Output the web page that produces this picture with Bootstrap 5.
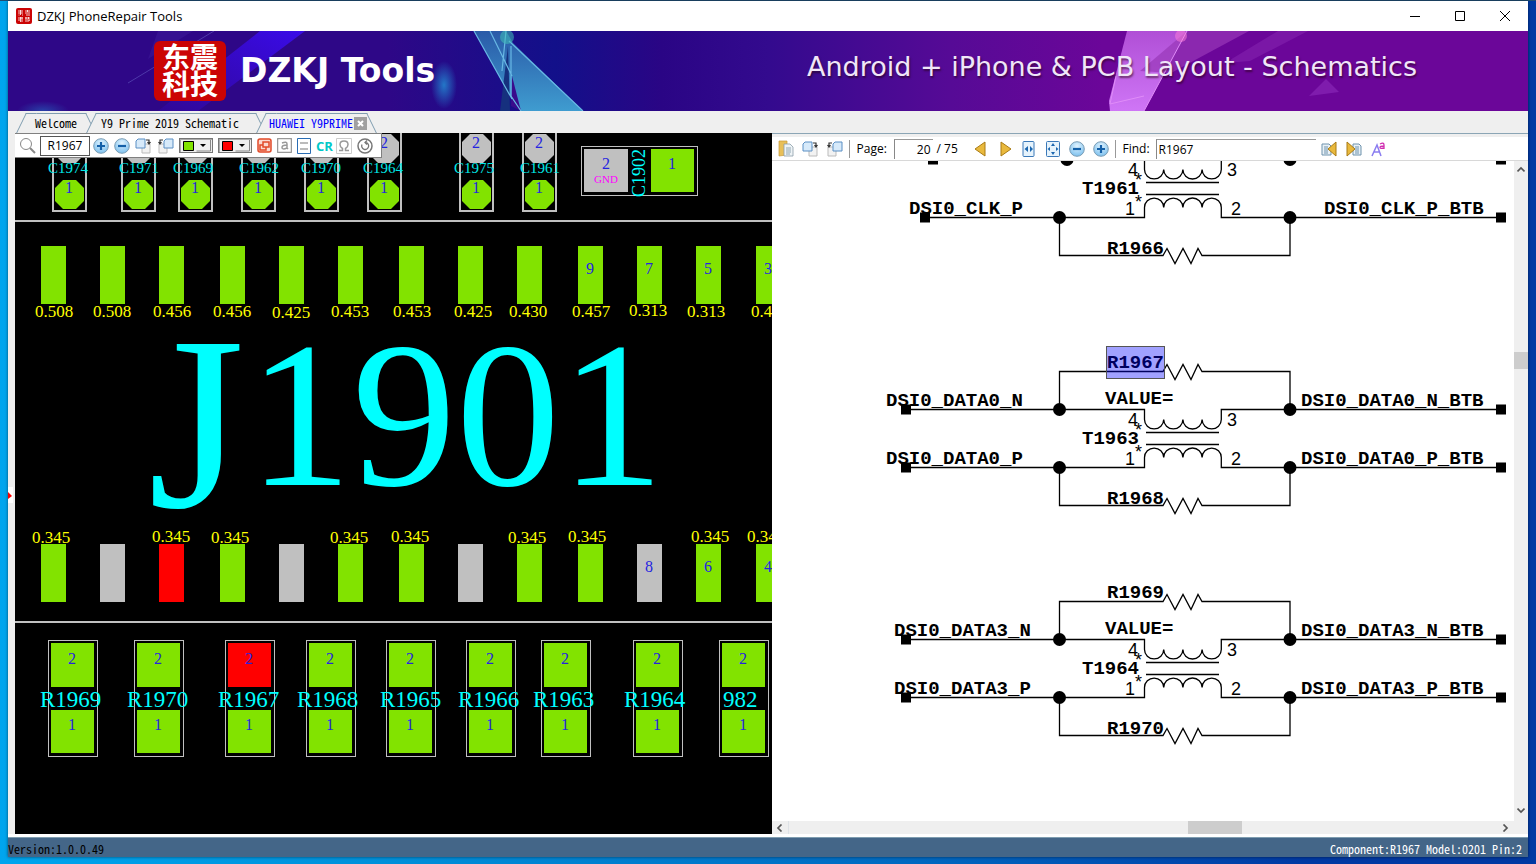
<!DOCTYPE html>
<html lang="en">
<head>
<meta charset="utf-8">
<meta name="viewport" content="width=device-width, initial-scale=1">
<title>DZKJ PhoneRepair Tools</title>
<link rel="stylesheet" href="https://cdn.jsdelivr.net/npm/bootstrap@5.3.0/dist/css/bootstrap.min.css">
<style>
:root { --cell: "Noto Sans Mono CJK SC", "Noto Sans CJK SC", monospace; --ui: "Open Sans", "Noto Sans", sans-serif; }
body { font: 12px/16px var(--ui); color: #000; background: linear-gradient(90deg, #00a5ee, #0090da 25%, #0068c0 60%, #0039a3 85%); }
button { background: none; border: 0; padding: 0; color: inherit; font: inherit; line-height: 0; }
input, select { border-radius: 0; outline: 0; font: inherit; }
svg { display: block; flex: none; }
.desktop { padding: 1px 8px 7px; background: linear-gradient(#1f4e75 1px, transparent 1px); }
.app { background: #efefef; box-shadow: 0 0 3px #0008; }
.titlebar { height: 30px; padding-right: 1px; font-size: 13px; }
.apptitle { margin-left: 5px; }
.winbtn { width: 45px; height: 30px; }
.banner { height: 80px; background: linear-gradient(90deg, #2e0787, #2e0787 25%, #12108a 36%, #2a0585 43%, #330a8e 50%, #560a96 62%, #6b0699 72%); }
.brandmark { width: 72px; height: 60px; margin-left: 146px; background: #cb0404; border-radius: 6px; color: #fff; font: 700 28px/27px "Noto Sans CJK SC", sans-serif; padding-top: 2px; }
.brandname { font: 700 33px/76px "DejaVu Sans", sans-serif; color: #fff; margin-left: 14px; }
.slogan { font: 400 27px/72px "DejaVu Sans", sans-serif; height: 80px; color: #f0e6f8; text-shadow: 1px 2px 2px #2008; margin-right: 111px; }
.tabstrip { height: 22px; padding: 2px 0 0 13px; }
.doctab { position: relative; height: 20px; font: 12px/20px var(--cell); color: #000; text-decoration: none; white-space: pre; isolation: isolate; padding: 0 14px; }
.doctab.closable { padding: 0 22px 0 10px; }
.doctab.current { padding: 0 5px 0 8px; gap: 1px; }
.doctab::before, .doctab::after { content: ""; position: absolute; z-index: -1; top: 0; bottom: 0; background: #efefef; border-top: 1px solid #7f9db0; }
.doctab::before { left: 0; right: 20px; transform: skewX(-26deg); border-left: 1px solid #7f9db0; }
.doctab::after { right: 0; left: 20px; transform: skewX(26deg); border-right: 1px solid #7f9db0; }
.doctab a { color: #00f; }
.tabclose { width: 13px; height: 13px; background: #a0a0a0; }
.gutter { width: 7px; }
.gutter svg { margin-top: 22px; }
.views { display: grid; grid-template-columns: 1fr 1fr; }
.board { background: #000; overflow: hidden; position: relative; min-width: 0; }
.boardtools { position: absolute; left: 0; top: 0; height: 25px; padding: 0 8px 0 4px; background: #fff; border: 1px solid #808080; border-left: 0; gap: 5px; }
.findpart { width: 50px; height: 20px; border: 1px solid #555; text-align: center; padding: 0; margin: 0 -2px 0 -1px; }
.swatch { position: relative; width: 34px; height: 15px; }
.swatch select { width: 34px; height: 15px; padding: 0; appearance: none; border: 1px solid #777; box-shadow: inset 1px 1px #aaa; color: transparent; background: #efefef; }
.swatch svg { position: absolute; left: 0; top: 0; pointer-events: none; }
.cr { font: 700 13px/16px var(--ui); color: #00c8c8; margin-right: -2px; }
.pdf { border-top: 1px solid #8ba5b5; padding-top: 3px; min-width: 0; }
.pdftools { height: 24px; background: #fff; border-bottom: 1px solid #d8d8d8; padding-left: 6px; }
.pdftools input { height: 20px; border: 0; border-left: 1px solid #888; border-top: 1px solid #999; background: #fff; padding: 0 2px; }
.sep { width: 1px; height: 18px; background: #999; margin: 0 7px 0 6px; }
.sheet { background: #fff; position: relative; overflow: hidden; min-width: 0; min-height: 0; }
.canvas { position: absolute; inset: 0; width: 100%; height: 100%; }
.vbar { width: 14px; padding: 5px 0 20px; }
.hbar { height: 13px; }
.hbar button { width: 17px; }
.thumb { background: #cdcdcd; position: absolute; }
.statusbar { height: 20px; background: #446688; border-top: 1px solid #7f9db0; font: 12px/22px var(--cell); white-space: pre; padding-right: 6px; }
.edge { height: 3px; background: #fff; }
.pad { font: 16px "Liberation Serif", serif; }
.reading { font: 17px "Liberation Serif", serif; }
.cap { font: 15px "Liberation Serif", serif; }
.res { font: 23px "Liberation Serif", serif; }
.netname { font: 11px "Liberation Serif", serif; }
.vcap { font: 18px "Liberation Serif", serif; }
.bigj { font: 248px "Liberation Serif", serif; }
.big { font: 208px "Liberation Serif", serif; }
.net { font: 700 19px "Liberation Mono", monospace; }
.pin { font: 18px "Liberation Sans", sans-serif; }
</style>
</head>
<body>
<div class="desktop vh-100 d-flex">
<div class="app d-flex flex-column flex-grow-1">
  <header class="titlebar bg-white d-flex align-items-center">
    <svg class="ms-2" width="16" height="16"><rect width="16" height="16" rx="2" fill="#cb0404"/><path d="M2 3h5M4.500 2v5M2 5h5M2.500 7h1M6 7h1M9 3h5M9 5h5M11.500 2v2M10 7h4M2 10h5M4.500 9v5M2 12h2M6 9v5M9 10h5M10 9v5M12.500 9v2M11 12h3M11.500 14l2-2" stroke="#fff" stroke-width=".8"/></svg>
    <span class="apptitle me-auto">DZKJ PhoneRepair Tools</span>
    <button class="winbtn" aria-label="Minimize"><svg class="mx-auto" width="10" height="10"><path d="M0 5.500h10" stroke="#000"/></svg></button>
    <button class="winbtn" aria-label="Maximize"><svg class="mx-auto" width="10" height="10"><path d="M.5.5h9v9h-9z" stroke="#000" fill="none"/></svg></button>
    <button class="winbtn" aria-label="Close"><svg class="mx-auto" width="10" height="10"><path d="M0 0l10 10M10 0L0 10" stroke="#000"/></svg></button>
  </header>

  <div class="banner position-relative d-flex align-items-center">
    <svg class="canvas" viewBox="0 0 1520 80" preserveAspectRatio="none">
      <defs>
        <linearGradient id="beam" x1="1" y1="0" x2="0" y2="1"><stop offset="0" stop-color="#3a0be8"/><stop offset="1" stop-color="#3a0be8" stop-opacity=".15"/></linearGradient>
        <linearGradient id="prism" x1="0" y1="0" x2="0" y2="1"><stop offset="0" stop-color="#2a5aa8"/><stop offset="1" stop-color="#3f9cd0"/></linearGradient>
        <linearGradient id="violet" x1="0" y1="0" x2="0" y2="1"><stop offset="0" stop-color="#b04fd6"/><stop offset="1" stop-color="#cf76f6"/></linearGradient>
        <radialGradient id="glow"><stop offset="0" stop-color="#2377c8"/><stop offset="1" stop-color="#2377c8" stop-opacity="0"/></radialGradient>
      </defs>
      <path d="M252 0h45L190 80h-40z" fill="url(#beam)"/>
      <path d="M120 52L206 0" stroke="#5c4fb8" stroke-width=".7"/>
      <path d="M150 0h35l-45 28z" fill="#4320a0" opacity=".4"/>
      <ellipse cx="436" cy="54" rx="13" ry="24" fill="url(#glow)"/>
      <ellipse cx="35" cy="80" rx="26" ry="10" fill="url(#glow)" opacity=".5"/>
      <path d="M466 0h32l7 12 70 68h-62l-9-12z" fill="url(#prism)"/>
      <path d="M500 15l-8 65h10z" fill="#16307e"/><path d="M504 45l9 35-10-5z" fill="#3a0b8c"/>
      <path d="M466 0l38 68M498 0l-4 40M501 10l74 70M503 15v50l10 15M482 0l22 45" stroke="#68b8e4" stroke-width="1.200" fill="none"/>
      <circle cx="499" cy="6" r="7" fill="#3fc0b8" opacity=".55"/>
      <path d="M1119 0h60l-43 80h-34l-1-10z" fill="url(#violet)"/>
      <path d="M1179 0h62l-78 42-31-2z" fill="#9838b8" opacity=".7"/>
      <path d="M1270 0h30l-58 30-25 2z" fill="#8a28b4" opacity=".5"/>
      <path d="M1318 46l13 13-30 4z" transform="translate(0 2)" fill="#8c2cba" opacity=".6"/>
      <path d="M1179 0l-43 80M1108 45l-6 28 34-8" stroke="#e08cf8" fill="none"/>
      <circle cx="1173" cy="5" r="6" fill="#ff80d8" opacity=".5"/>
    </svg>
    <div class="brandmark position-relative text-center">东震<br>科技</div>
    <div class="brandname position-relative">DZKJ Tools</div>
    <div class="slogan position-relative ms-auto">Android + iPhone &amp; PCB Layout - Schematics</div>
  </div>

  <nav class="tabstrip d-flex">
    <a class="doctab" href="#">Welcome</a>
    <a class="doctab closable" href="#">Y9 Prime 2019 Schematic</a>
    <span class="doctab current d-flex align-items-center"><a class="text-decoration-none" href="#">HUAWEI Y9PRIME</a><button class="tabclose" aria-label="Close tab"><svg width="13" height="13"><path d="M4 4l5 5M9 4L4 9" stroke="#fff" stroke-width="2"/></svg></button></span>
  </nav>

  <main class="d-flex flex-grow-1">
    <div class="gutter d-flex align-items-center"><svg width="5" height="16"><path fill="#fff" d="M0 0h5v16H0z"/><path d="M0 5l4 4-4 3z" fill="#f00"/></svg></div>
    <div class="views flex-grow-1">
      <section class="board">
        <svg class="canvas"><g id="board" transform="translate(-15 -133)"></g></svg>
        <div class="boardtools d-flex align-items-center">
          <svg width="17" height="17" fill="none" stroke="#888"><circle cx="7" cy="7" r="5.500"/><path d="M11 11l5 5" stroke-width="2"/></svg>
          <input class="findpart" value="R1967" aria-label="Find part">
          <button aria-label="Zoom in"><svg width="16" height="16"><use href="#i-plus"/></svg></button>
          <button aria-label="Zoom out"><svg width="16" height="16"><use href="#i-minus"/></svg></button>
          <button aria-label="Rotate right"><svg width="17" height="16"><use href="#i-rotr"/></svg></button>
          <button aria-label="Rotate left"><svg width="17" height="16"><use href="#i-rotl"/></svg></button>
          <span class="swatch"><select aria-label="Pad colour"><option>Green</option></select><svg width="34" height="15"><path d="M4.500 3.500h10v9h-10z" fill="#82e300" stroke="#000"/><path d="M31.500 2v11h-14" stroke="#888" fill="none"/><path d="M21 6h6l-3 3z"/></svg></span>
          <span class="swatch"><select aria-label="Highlight colour"><option>Red</option></select><svg width="34" height="15"><path d="M4.500 3.500h10v9h-10z" fill="#f00" stroke="#000"/><path d="M31.500 2v11h-14" stroke="#888" fill="none"/><path d="M21 6h6l-3 3z"/></svg></span>
          <button aria-label="Layers"><svg width="15" height="15" fill="none" stroke="#e24a28" stroke-width="1.500"><rect x="1" y="1" width="13" height="13" rx="2" fill="#fbd9cf"/><path d="M6 4h6v5H6zM9 9v3H3V7h3"/></svg></button>
          <button aria-label="Names"><svg width="15" height="15" fill="none" stroke="#999"><rect x=".5" y=".5" width="14" height="14" rx="1" stroke-width="1.500"/><path d="M5 5q5-2 5 1v5M10 7q-5 0-5 2.500t5 .5l1 1" stroke-width="1.500"/></svg></button>
          <button aria-label="Values"><svg width="14" height="16"><path d="M.5.5h13v15H.5z" fill="#fff" stroke="#2a6db4"/><path d="M3 5h8M3 11h8" stroke="#bbb" stroke-width="2"/></svg></button>
          <button class="cr">CR</button>
          <button aria-label="Resistance"><svg width="16" height="16" fill="none" stroke="#999"><path d="M.5.5h15v15H.5z" stroke="#ccc"/><path d="M3 12.500h3.500v-2Q4 9 4 6.500 4 3 8 3t4 3.500Q12 9 9.500 10.500v2H13" stroke-width="1.500"/></svg></button>
          <button aria-label="Reset"><svg width="16" height="16" fill="none" stroke="#777"><circle cx="8" cy="8" r="7" stroke-width="1.500"/><path d="M5 6.500A3.500 3.500 0 1 0 8.500 4.500M10 2.500l-2 2 2 2" stroke-width="1.300"/></svg></button>
        </div>
      </section>

      <section class="pdf d-flex flex-column">
        <div class="pdftools d-flex align-items-center">
          <button aria-label="Open"><svg width="16" height="17"><path d="M1 1h8v14l-8 1z" fill="#e8bf58" stroke="#c79a35" stroke-width=".7"/><path d="M6 4h6l3 3v9H6z" fill="#eef3f6" stroke="#8a9da8" stroke-width=".8"/><path d="M8 8h5M8 10h5M8 12h5M8 14h4" stroke="#7895a5" stroke-width=".8"/></svg></button>
          <button class="ms-2" aria-label="Rotate right"><svg width="17" height="16"><use href="#i-rotr"/></svg></button>
          <button style="margin-left:7px" aria-label="Rotate left"><svg width="17" height="16"><use href="#i-rotl"/></svg></button>
          <span class="sep"></span>
          <label for="page" style="width:37px">Page:</label>
          <input id="page" class="text-end" style="width:39px" value="20">
          <span class="ms-1" style="width:36px">/ 75</span>
          <button aria-label="Previous page"><svg width="14" height="16"><path d="M12 1v14L2 8z" fill="#e9b93d" stroke="#a97b15"/></svg></button>
          <button style="margin:0 9px 0 12px" aria-label="Next page"><svg width="14" height="16"><path d="M2 1v14l10-7z" fill="#e9b93d" stroke="#a97b15"/></svg></button>
          <button aria-label="Fit width"><svg width="14" height="16"><rect x="1" y=".5" width="11" height="15" rx="1" fill="#e6f3fc" stroke="#3a78b8"/><path d="M6 5v6L2.500 8zM8 5v6l3-3z" fill="#1c67b0"/></svg></button>
          <button style="margin:0 9px 0 10px" aria-label="Fit page"><svg width="14" height="16"><rect x=".5" y=".5" width="13" height="15" rx="1" fill="#e6f3fc" stroke="#3a78b8"/><path d="M5 5l2-3 2 3zM5 11l2 3 2-3zM4 6L1.500 8 4 10zM10 6l2.500 2L10 10z" fill="#1c67b0"/></svg></button>
          <button aria-label="Zoom out"><svg width="16" height="16"><use href="#i-minus"/></svg></button>
          <button class="ms-2" aria-label="Zoom in"><svg width="16" height="16"><use href="#i-plus"/></svg></button>
          <span class="sep"></span>
          <label for="find" style="width:33px">Find:</label>
          <input id="find" style="width:160px" value="R1967">
          <button style="margin:0 8px 0 5px" aria-label="Find previous"><svg width="17" height="16"><path d="M1 3h7l2 2v9H1z" fill="#e8f0f6" stroke="#6f93ad"/><path d="M3 6h4M3 8h4M3 10h4M3 12h4" stroke="#6f93ad"/><path d="M15 1v14L7 8z" fill="#e9b93d" stroke="#a97b15"/></svg></button>
          <button aria-label="Find next"><svg width="17" height="16"><path d="M7 3h6l2 2v9H7z" fill="#e8f0f6" stroke="#6f93ad"/><path d="M9 6h4M9 8h4M9 10h4M9 12h4" stroke="#6f93ad"/><path d="M1 1v14l8-7z" fill="#e9b93d" stroke="#a97b15"/></svg></button>
          <button class="ms-2" aria-label="Match case"><svg width="15" height="16" fill="none" stroke="#8a7df0" stroke-width="1.500"><path d="M1 15L6 4l4 11M3 11h6"/><path d="M9 3q4-2 4 1v4M13 5q-4 0-4 1.500T13 7" stroke="#d02fb0" stroke-width="1.300"/></svg></button>
        </div>
        <div class="d-flex flex-grow-1">
          <div class="d-flex flex-column flex-grow-1">
            <div class="sheet flex-grow-1"><svg class="canvas"><g id="schematic" transform="translate(-772 -161)"></g></svg></div>
            <div class="hbar d-flex align-items-center">
              <button class="h-100 border-end" aria-label="Scroll left"><svg class="mx-auto" width="7" height="8"><path d="M5.500.5L2 4l3.500 3.500" fill="none" stroke="#555" stroke-width="1.700"/></svg></button>
              <div class="position-relative flex-grow-1 h-100"><div class="thumb h-100" style="left:56.4%;width:7.6%"></div></div>
              <button class="h-100" aria-label="Scroll right"><svg class="mx-auto" width="7" height="8"><path d="M1.500.5L5 4 1.500 7.500" fill="none" stroke="#555" stroke-width="1.700"/></svg></button>
            </div>
          </div>
          <div class="vbar d-flex flex-column align-items-center">
            <button aria-label="Scroll up"><svg width="8" height="7"><path d="M.5 5.500L4 2l3.500 3.500" fill="none" stroke="#555" stroke-width="1.700"/></svg></button>
            <div class="position-relative flex-grow-1 w-100"><div class="thumb w-100" style="top:28.2%;height:2.700%"></div></div>
            <button aria-label="Scroll down"><svg width="8" height="7"><path d="M.5 1.500L4 5l3.500-3.500" fill="none" stroke="#555" stroke-width="1.700"/></svg></button>
          </div>
        </div>
      </section>
    </div>
  </main>
  <div class="edge"></div>
  <footer class="statusbar d-flex justify-content-between"><span>Version:1.0.0.49</span><span class="text-white">Component:R1967 Model:0201 Pin:2</span></footer>
</div>
</div>

<svg width="0" height="0" class="position-absolute">
  <defs>
    <radialGradient id="orb" cx=".5" cy=".3" r=".7"><stop offset="0" stop-color="#e2f4ff"/><stop offset="1" stop-color="#7cc0ee"/></radialGradient>
    <symbol id="i-plus" viewBox="0 0 16 16"><circle cx="8" cy="8" r="7.300" fill="url(#orb)" stroke="#7b9db5"/><path d="M4 8h8M8 4v8" stroke="#1460a8" stroke-width="2.200"/></symbol>
    <symbol id="i-minus" viewBox="0 0 16 16"><circle cx="8" cy="8" r="7.300" fill="url(#orb)" stroke="#7b9db5"/><path d="M4 8h8" stroke="#1460a8" stroke-width="2.200"/></symbol>
    <symbol id="i-rotr" viewBox="0 0 17 16"><path d="M7 6h8v9H7z" fill="#f2f2f2" stroke="#bbb"/><path d="M3 1h7v9H1V3z" fill="#d7eafa" stroke="#5b8fc4"/><path d="M11 2h3v3M12.500 4L14 6l1.500-2" fill="none" stroke="#333" stroke-width="1.200"/></symbol>
    <symbol id="i-rotl" viewBox="0 0 17 16"><path d="M2 6h8v9H2z" fill="#f2f2f2" stroke="#bbb"/><path d="M9 1h7v9H7V3z" fill="#d7eafa" stroke="#5b8fc4"/><path d="M6 2H3v3M1.500 4L3 6l1.500-2" fill="none" stroke="#333" stroke-width="1.200"/></symbol>
  </defs>
</svg>

<script>
const NS = 'http://www.w3.org/2000/svg';
const painter = id => (tag, attrs, text) => {
  const el = document.createElementNS(NS, tag);
  for (const k in attrs) el.setAttribute(k, attrs[k]);
  if (text) el.textContent = text;
  document.getElementById(id).append(el);
};

/* Board view: pads, outlines, designators and diode readings */
const b = painter('board');
const LIME = '#82e300', PAD = '#c0c0c0', RED = '#f00', INK = '#2424e0';
const rect = (x, y, w, h, fill) => b('rect', {x, y, width: w, height: h, fill});
const label = (cls, x, y, t, fill, extra) => b('text', {x, y, fill, class: cls, ...extra}, t);
const digit = (x, y, t) => label('pad', x, y, t, INK, {'text-anchor': 'middle'});
const oct = (x, y, fill) => b('path', {d: `M${x + 8} ${y}h13l8 8v13l-8 8h-13l-8-8v-13z`, fill});

[['C1974', 52, 48], ['C1971', 121, 119], ['C1969', 178, 173], ['C1962', 241, 239], ['C1970', 304, 301], ['C1964', 367, 363], ['C1975', 459, 454], ['C1961', 522, 520]].forEach(([n, x, tx], i) => {
  b('rect', {x: x + 1, y: 120, width: 33, height: 91, fill: 'none', stroke: PAD, 'stroke-width': 2});
  oct(x + 3, 134, PAD); oct(x + 3, 180, LIME);
  if (i > 4) digit(x + 17, 148, '2');
  digit(x + 17, 193, '1');
  label('cap', tx, 173, n, '#00e8e8');
});
b('rect', {x: 581.5, y: 146.5, width: 116, height: 49, fill: 'none', stroke: PAD});
rect(584, 149, 44, 43, PAD); rect(651, 149, 43, 43, LIME);
digit(606, 169, '2'); digit(672, 169, '1');
label('netname', 594, 183, 'GND', '#f0f');
b('text', {transform: 'translate(645 197) rotate(-90)', fill: '#0ff', class: 'vcap'}, 'C1902');
rect(15, 220, 2000, 2, PAD); rect(15, 621, 2000, 2, PAD);

const pins = [41, 100, 159, 220, 279, 338, 399, 458, 517, 578, 637, 696, 756];
const lower = [LIME, PAD, RED, LIME, PAD, LIME, LIME, PAD, LIME, LIME, PAD, LIME, LIME];
pins.forEach((x, i) => { rect(x, 246, 25, 58, LIME); rect(x, 544, 25, 58, lower[i]); });
['9', '7', '5', '3'].forEach((t, i) => digit(pins[9 + i] + 12, 274, t));
['8', '6', '4'].forEach((t, i) => digit(pins[10 + i] + 12, 572, t));
[[35, '0.508'], [93, '0.508'], [153, '0.456'], [213, '0.456'], [272, '0.425', 318], [331, '0.453'], [393, '0.453'], [454, '0.425'], [509, '0.430'], [572, '0.457'], [629, '0.313', 316], [687, '0.313'], [751, '0.457']]
  .forEach(([x, t, y]) => label('reading', x, y || 317, t, '#ff0'));
[[32, 543], [152, 542], [211, 543], [330, 543], [391, 542], [508, 543], [568, 542], [691, 542], [747, 542]]
  .forEach(([x, y]) => label('reading', x, y, '0.345', '#ff0'));
label('bigj', 148, 507, 'J', '#0ff');
label('big', 248, 485, '1901', '#0ff');

[['R1969', 48, 40], ['R1970', 134, 127], ['R1967', 225, 218], ['R1968', 306, 297], ['R1965', 386, 380], ['R1966', 466, 458], ['R1963', 541, 533], ['R1964', 633, 624], ['982', 719, 723]].forEach(([n, x, tx]) => {
  b('rect', {x: x + .5, y: 640.5, width: 49, height: 116, fill: 'none', stroke: PAD});
  rect(x + 3, 643, 43, 44, n === 'R1967' ? RED : LIME); rect(x + 3, 710, 43, 43, LIME);
  digit(x + 24, 664, '2'); digit(x + 24, 730, '1');
  label('res', tx, 707, n, '#0ff');
});

/* Schematic view: three choke blocks with their bypass resistors */
const s = painter('schematic');
const wire = d => s('path', {d, fill: 'none', stroke: '#000', 'stroke-width': 1.3});
const net = (x, y, t) => s('text', {x, y, class: 'net'}, t);
const pin = (x, y, t) => s('text', {x, y, class: 'pin'}, t);
const dot = (cx, cy) => s('circle', {cx, cy, r: 6.5});
const port = (x, y) => s('rect', {x: x - 5, y: y - 5, width: 10, height: 10});
const resistor = (y, node) => wire(`M1059.500 ${node}V${y}H1163l4-7 8 15 8-15 8 15 7-15 4 7H1290V${node}`);
const bump = sweep => `a9.6 9.500 0 0 ${sweep} 19.200 0`.repeat(4);
[
  {dy: -250, n: ['', ''], p: ['DSI0_CLK_P', 'DSI0_CLK_P_BTB'], t: 'T1961', r: ['', 'R1966'], lx: 909, rx: 1324, port: 925},
  {dy: 0, n: ['DSI0_DATA0_N', 'DSI0_DATA0_N_BTB'], p: ['DSI0_DATA0_P', 'DSI0_DATA0_P_BTB'], t: 'T1963', r: ['R1967', 'R1968'], lx: 886, rx: 1301, port: 906},
  {dy: 230, n: ['DSI0_DATA3_N', 'DSI0_DATA3_N_BTB'], p: ['DSI0_DATA3_P', 'DSI0_DATA3_P_BTB'], t: 'T1964', r: ['R1969', 'R1970'], lx: 894, rx: 1301, port: 906}
].forEach(g => {
  const N = 409.5 + g.dy, P = 467.5 + g.dy;
  wire(`M${g.port} ${N}H1144.500v10${bump(0)}V${N}H1501`);
  wire(`M${g.port} ${P}H1144.500v-10${bump(1)}V${P}H1501`);
  wire(`M1146 ${N + 23}h73M1146 ${N + 35}h73`);
  if (g.r[0]) { resistor(N - 38, N); net(1107, N - 42, g.r[0]); net(1105, N - 6, 'VALUE='); dot(1059.5, N); port(g.port, N); }
  else { dot(1067, N); port(933, N); }
  resistor(P + 38, P); net(1107, P + 36, g.r[1]);
  dot(1059.5, P); dot(1290, N); dot(1290, P); port(g.port, P); port(1501, N); port(1501, P);
  if (g.n[0]) { net(g.lx, N - 4, g.n[0]); net(g.rx, N - 4, g.n[1]); }
  net(g.lx, P - 4, g.p[0]); net(g.rx, P - 4, g.p[1]); net(1082, N + 34, g.t);
  pin(1128, N + 16, '4'); pin(1227, N + 16, '3'); pin(1125, P - 3, '1'); pin(1231, P - 3, '2');
  pin(1135, N + 26, '*'); pin(1135, P - 10, '*');
});
s('rect', {x: 1106.5, y: 346.5, width: 58, height: 32, fill: '#00f', 'fill-opacity': .37, stroke: '#555'});
</script>
<script src="https://cdn.jsdelivr.net/npm/bootstrap@5.3.0/dist/js/bootstrap.bundle.min.js"></script>
</body>
</html>
